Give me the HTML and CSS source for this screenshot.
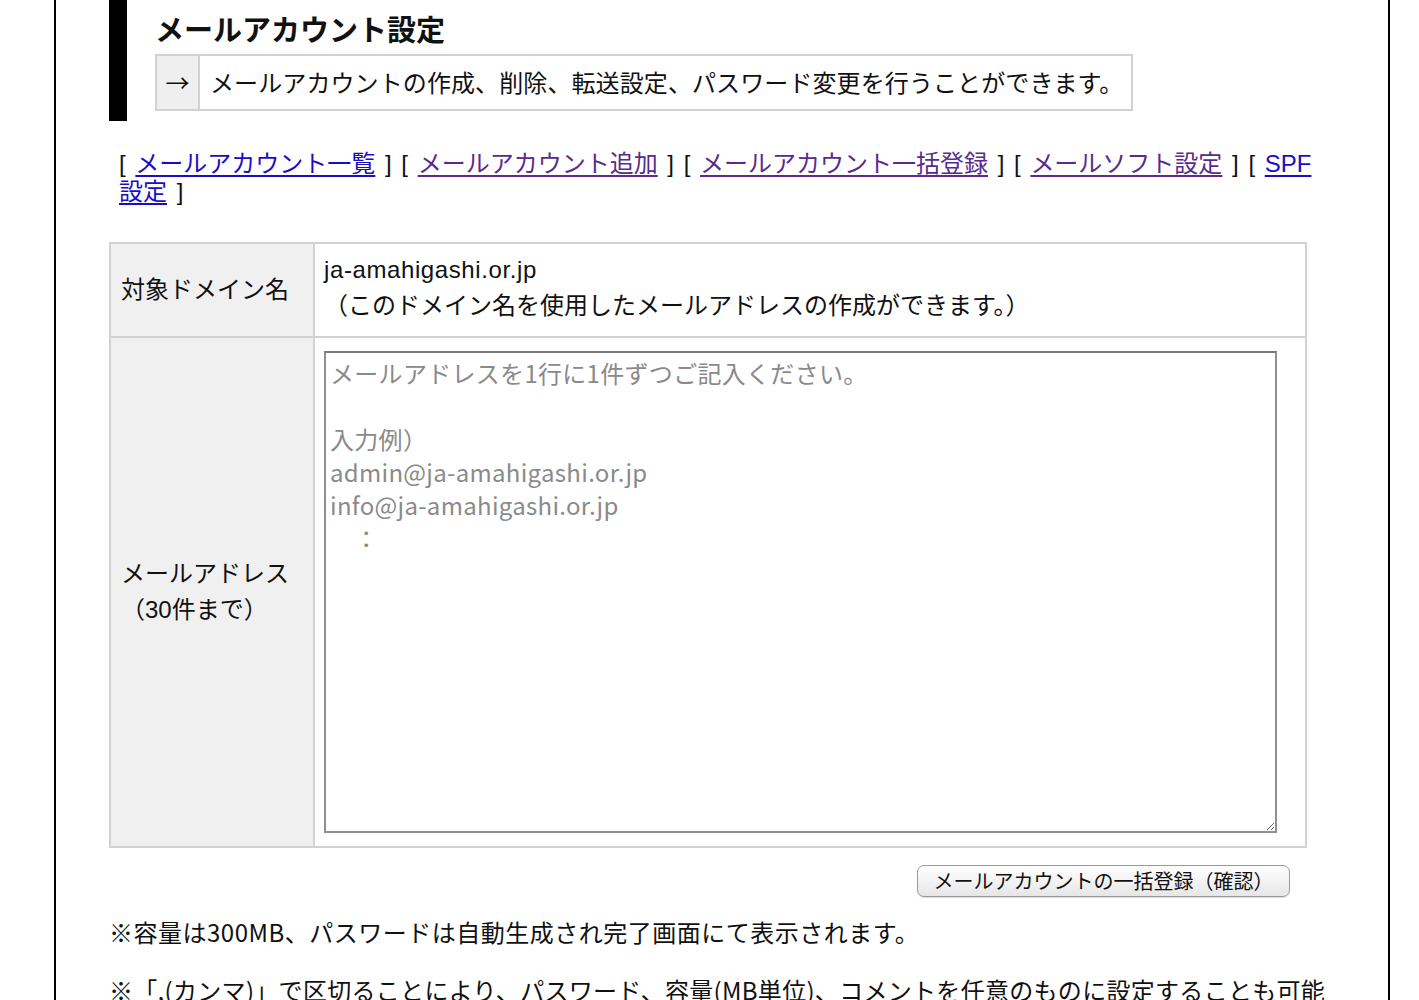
FILE: index.html
```html
<!DOCTYPE html>
<html lang="ja">
<head>
<meta charset="utf-8">
<title>メールアカウント設定</title>
<link rel="stylesheet" href="styles.css">
</head>
<body>
<div class="page">
  <div class="head">
    <h1 class="title">メールアカウント設定</h1>
    <div class="lead">
      <span class="lead-arrow">→</span>
      <span class="lead-text">メールアカウントの作成、削除、転送設定、パスワード変更を行うことができます。</span>
    </div>
  </div>

  <p class="nav">[ <a href="#" class="link">メールアカウント一覧</a> ] [ <a href="#" class="link visited">メールアカウント追加</a> ] [ <a href="#" class="link visited">メールアカウント一括登録</a> ] [ <a href="#" class="link visited">メールソフト設定</a> ] [ <a href="#" class="link">SPF設定</a> ]</p>

  <table class="form">
    <tr class="row-domain">
      <th class="label">対象ドメイン名</th>
      <td class="value"><span class="domain">ja-amahigashi.or.jp</span><br>（このドメイン名を使用したメールアドレスの作成ができます。）</td>
    </tr>
    <tr class="row-mail">
      <th class="label">メールアドレス<br>（30件まで）</th>
      <td class="value area-cell"><textarea class="mail-area" placeholder="メールアドレスを1行に1件ずつご記入ください。&#10;&#10;入力例）&#10;admin@ja-amahigashi.or.jp&#10;info@ja-amahigashi.or.jp&#10;　："></textarea></td>
    </tr>
  </table>

  <div class="actions">
    <button type="button" class="btn">メールアカウントの一括登録（確認）</button>
  </div>

  <p class="note">※容量は300MB、パスワードは自動生成され完了画面にて表示されます。</p>
  <p class="note second">※「,(カンマ)」で区切ることにより、パスワード、容量(MB単位)、コメントを任意のものに設定することも可能です。</p>
</div>
</body>
</html>
```

FILE: styles.css
```css
html, body {
  margin: 0;
  padding: 0;
  background: #fff;
}

body {
  font-family: "Liberation Sans", "Noto Sans CJK JP", sans-serif;
  font-size: 24px;
  color: #111;
}

.page {
  margin-left: 54px;
  width: 1226px;
  min-height: 1000px;
  border-left: 2px solid #000;
  border-right: 2px solid #000;
  padding: 0 53px;
}

.head {
  border-left: 18px solid #000;
  padding: 8px 0 10px 28px;
}

.title {
  margin: 0;
  font-size: 29px;
  line-height: 40px;
  font-weight: bold;
  color: #111;
  font-family: "Noto Sans CJK JP", sans-serif;
}

.lead {
  display: inline-flex;
  margin-top: 6px;
  border: 2px solid #d2d2d2;
  height: 57px;
  box-sizing: border-box;
  align-items: stretch;
}

.lead-arrow {
  width: 43px;
  background: #efefef;
  border-right: 2px solid #d2d2d2;
  display: flex;
  align-items: center;
  justify-content: center;
  font-family: "Noto Sans CJK JP", sans-serif;
  padding-bottom: 3px;
  box-sizing: border-box;
}

.lead-text {
  display: flex;
  align-items: center;
  padding: 0 8px 3px 10px;
  font-family: "Noto Sans CJK JP", sans-serif;
  letter-spacing: 0.1px;
}

.nav {
  margin: 29px 0 0;
  padding-left: 10px;
  line-height: 28px;
  word-spacing: 3px;
}

.link {
  color: #1a0dc8;
  text-decoration: underline;
  text-underline-offset: 3px;
}

.link.visited {
  color: #5a2a8e;
}

.form {
  margin-top: 36px;
  width: 1198px;
  border-collapse: collapse;
  border: 2px solid #d2d2d2;
}

.form th,
.form td {
  border: 2px solid #d2d2d2;
}

.label {
  width: 192px;
  background: #f0f0f0;
  text-align: left;
  font-weight: normal;
  padding: 0 0 0 10px;
  line-height: 36px;
  vertical-align: middle;
}

.value {
  padding: 10px 10px;
  line-height: 36px;
  vertical-align: middle;
}

.row-domain .value {
  height: 71px;
  padding-top: 8px;
  padding-bottom: 12px;
  padding-left: 9px;
}

.domain {
  letter-spacing: 0.6px;
}

.area-cell {
  padding: 13px 27px 13px 9px;
}

.mail-area {
  display: block;
  width: 953px;
  height: 482px;
  box-sizing: border-box;
  margin: 0;
  padding: 3px 4px;
  border: 2px solid #8f8f8f;
  border-top-color: #7a7a7a;
  font-family: "Noto Sans CJK JP", sans-serif;
  font-size: 24px;
  line-height: 33px;
  color: #111;
  resize: both;
  letter-spacing: 0.3px;
}

.mail-area::placeholder {
  color: #8a8a8a;
}

.actions {
  width: 1198px;
  box-sizing: border-box;
  padding-right: 17px;
  margin-top: 17px;
  text-align: right;
}

.btn {
  width: 373px;
  height: 32px;
  padding: 0;
  border: 1px solid #9a9a9a;
  border-radius: 7px;
  background: linear-gradient(#ffffff, #f3f3f3 50%, #e6e6e6);
  font-family: "Noto Sans CJK JP", sans-serif;
  font-size: 20px;
  line-height: 28px;
  color: #111;
  box-shadow: 0 1px 1px rgba(0,0,0,0.15);
}

.note {
  margin: 17px 0 0;
  line-height: 36px;
  font-family: "Noto Sans CJK JP", sans-serif;
  letter-spacing: 0.5px;
}

.note.second {
  margin-top: 22px;
  letter-spacing: 0.3px;
}
```
